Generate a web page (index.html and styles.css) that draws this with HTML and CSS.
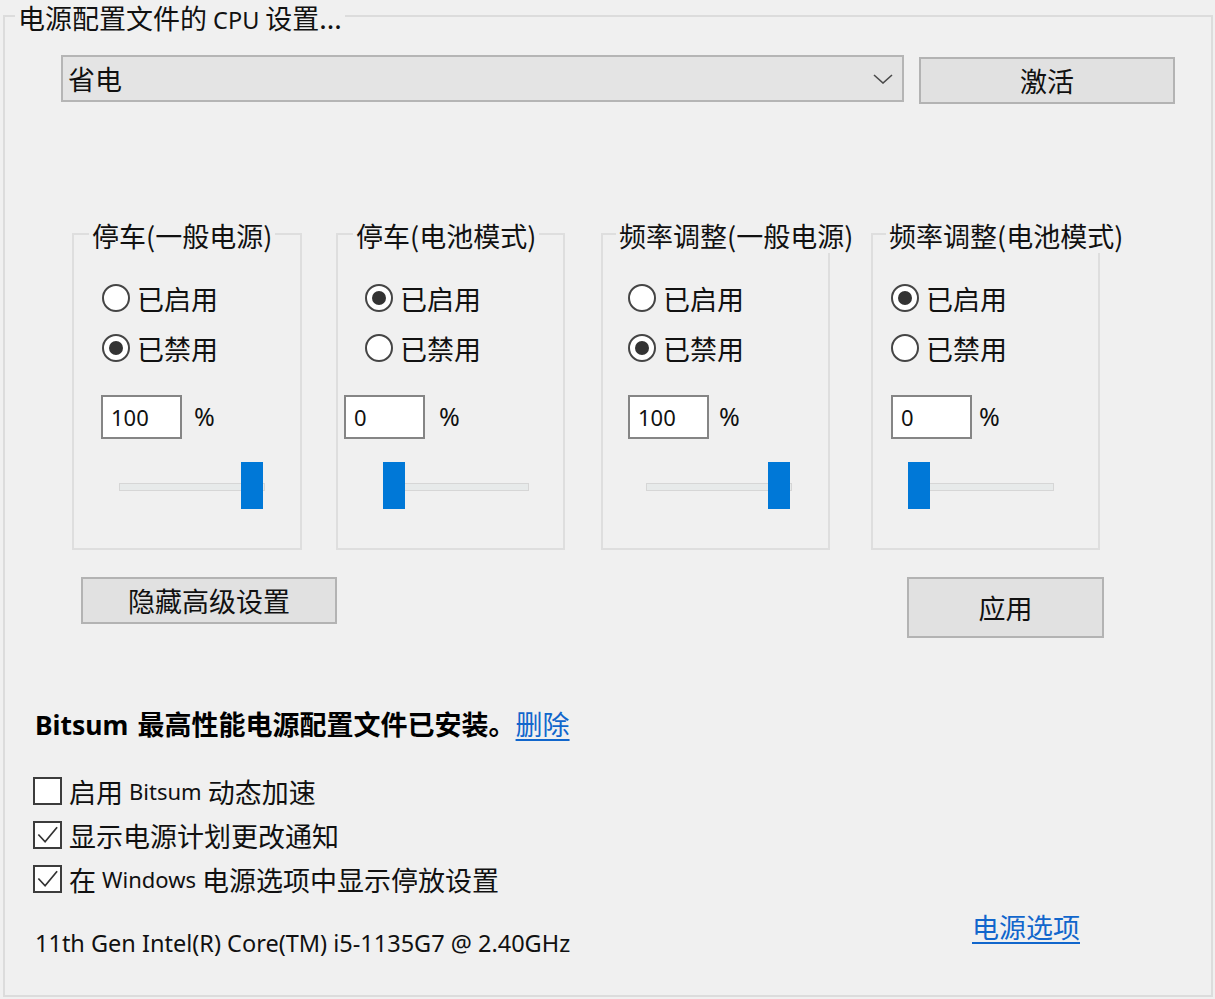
FILE: index.html
```html
<!DOCTYPE html>
<html lang="zh-CN">
<head>
<meta charset="utf-8">
<title>CPU 设置</title>
<link rel="stylesheet" href="styles.css">
</head>
<body>
<div class="frame">
  <div class="frame-title">电源配置文件的 <span class="lat">CPU</span> 设置...</div>

  <div class="profile-row">
    <div class="select">
      <span>省电</span>
      <svg class="chev" width="20" height="10" viewBox="0 0 20 10"><polyline points="1,1 10,9 19,1" fill="none" stroke="#4a4a4a" stroke-width="1.6"/></svg>
    </div>
    <div class="btn btn-activate">激活</div>
  </div>

  <div class="groups">
    <div class="group g1">
      <div class="group-title">停车(一般电源)</div>
      <div class="radio-row"><span class="radio"></span>已启用</div>
      <div class="radio-row"><span class="radio checked"></span>已禁用</div>
      <div class="value-row"><div class="textbox">100</div><span class="pct">%</span></div>
      <div class="slider"><div class="track"></div><div class="thumb max"></div></div>
    </div>
    <div class="group g2">
      <div class="group-title">停车(电池模式)</div>
      <div class="radio-row"><span class="radio checked"></span>已启用</div>
      <div class="radio-row"><span class="radio"></span>已禁用</div>
      <div class="value-row"><div class="textbox">0</div><span class="pct">%</span></div>
      <div class="slider"><div class="track"></div><div class="thumb min"></div></div>
    </div>
    <div class="group g3">
      <div class="group-title">频率调整(一般电源)</div>
      <div class="radio-row"><span class="radio"></span>已启用</div>
      <div class="radio-row"><span class="radio checked"></span>已禁用</div>
      <div class="value-row"><div class="textbox">100</div><span class="pct">%</span></div>
      <div class="slider"><div class="track"></div><div class="thumb max"></div></div>
    </div>
    <div class="group g4">
      <div class="group-title">频率调整(电池模式)</div>
      <div class="radio-row"><span class="radio checked"></span>已启用</div>
      <div class="radio-row"><span class="radio"></span>已禁用</div>
      <div class="value-row"><div class="textbox">0</div><span class="pct">%</span></div>
      <div class="slider"><div class="track"></div><div class="thumb min"></div></div>
    </div>
  </div>

  <div class="action-row">
    <div class="btn btn-hide">隐藏高级设置</div>
    <div class="btn btn-apply">应用</div>
  </div>

  <p class="installed"><b><span class="lat-b">Bitsum</span> 最高性能电源配置文件已安装。</b><a class="link" href="#">删除</a></p>

  <div class="checks">
    <div class="check-row"><span class="checkbox"></span>启用 <span class="lat">Bitsum</span> 动态加速</div>
    <div class="check-row"><span class="checkbox"><svg width="26" height="26" viewBox="0 0 26 26"><polyline points="3.5,12.5 10.5,20 23,5" fill="none" stroke="#333" stroke-width="1.8"/></svg></span>显示电源计划更改通知</div>
    <div class="check-row"><span class="checkbox"><svg width="26" height="26" viewBox="0 0 26 26"><polyline points="3.5,12.5 10.5,20 23,5" fill="none" stroke="#333" stroke-width="1.8"/></svg></span>在 <span class="lat">Windows</span> 电源选项中显示停放设置</div>
  </div>

  <div class="footer">
    <span class="cpu">11th Gen Intel(R) Core(TM) i5-1135G7 @ 2.40GHz</span>
    <a class="link power-link" href="#">电源选项</a>
  </div>
</div>
</body>
</html>
```

FILE: styles.css
```css
* { box-sizing: border-box; }

html, body {
  margin: 0;
  padding: 0;
  background: #f0f0f0;
}

body {
  width: 1215px;
  height: 999px;
  overflow: hidden;
  font-family: "Noto Sans CJK SC", "Noto Sans", sans-serif;
  font-size: 27px;
  color: #111;
}

.lat {
  font-family: "Noto Sans", "Noto Sans CJK SC", sans-serif;
  font-size: 22px;
}

.frame-title .lat { font-size: 23.5px; }

.lat-b {
  font-family: "Noto Sans", "Noto Sans CJK SC", sans-serif;
  font-size: 26.5px;
  margin-right: 3px;
}

.frame {
  position: relative;
  margin: 15px 0 0 3px;
  width: 1210px;
  height: 982px;
  border: 2px solid #dcdcdc;
}

.frame-title {
  position: absolute;
  top: -15px;
  left: 10px;
  padding: 0 3px;
  line-height: 32px;
  background: #f0f0f0;
  white-space: nowrap;
}

/* profile row */
.profile-row {
  display: flex;
  align-items: flex-start;
  margin: 38px 0 0 56px;
}

.select {
  width: 843px;
  height: 47px;
  display: flex;
  align-items: center;
  justify-content: space-between;
  padding: 0 9px 0 5px;
  background: #e4e4e4;
  border: 2px solid #b5b5b5;
  line-height: 1;
}

.chev { display: block; }

.btn {
  display: flex;
  align-items: center;
  justify-content: center;
  background: #e1e1e1;
  border: 2px solid #b3b3b3;
  line-height: 1;
}

.btn-activate {
  width: 256px;
  height: 47px;
  margin: 2px 0 0 15px;
}

/* groups */
.groups {
  display: flex;
  margin-top: 129px;
}

.group {
  position: relative;
  width: 229px;
  height: 317px;
  border: 2px solid #dedede;
  padding-top: 38px;
}

.g1 { width: 230px; margin-left: 67px; --rx: 28px; --bx: 27px; --pg: 12px; --tx: 45px; }
.g2 { margin-left: 34px; --rx: 27px; --bx: 6px; --pg: 14px; --tx: 45px; }
.g3 { margin-left: 36px; --rx: 25px; --bx: 25px; --pg: 10px; --tx: 43px; }
.g4 { margin-left: 41px; --rx: 18px; --bx: 18px; --pg: 7px; --tx: 35px; }

.group-title {
  position: absolute;
  top: -16px;
  left: 15px;
  padding: 0 3px;
  line-height: 34px;
  background: #f0f0f0;
  white-space: nowrap;
}

.g3 .group-title, .g4 .group-title { left: 13px; }

.radio-row {
  height: 50px;
  display: flex;
  align-items: center;
  padding-left: var(--rx);
  line-height: 1;
}

.radio {
  width: 28px;
  height: 28px;
  margin-right: 7px;
  border: 2px solid #454545;
  border-radius: 50%;
  background: #fff;
  display: flex;
  align-items: center;
  justify-content: center;
}

.radio.checked::after {
  content: "";
  width: 14px;
  height: 14px;
  border-radius: 50%;
  background: #333;
}

.value-row {
  display: flex;
  align-items: center;
  margin-top: 22px;
  padding-left: var(--bx);
}

.textbox {
  width: 81px;
  height: 44px;
  padding-left: 8px;
  display: flex;
  align-items: center;
  background: #fff;
  border: 2px solid #858585;
  font-family: "Noto Sans", sans-serif;
  font-size: 22px;
  color: #111;
}

.pct {
  margin-left: var(--pg);
  margin-top: -2px;
  font-family: "Noto Sans", sans-serif;
  font-size: 25px;
  line-height: 1;
}

.slider {
  position: relative;
  width: 146px;
  height: 47px;
  margin: 23px 0 0 var(--tx);
}

.track {
  position: absolute;
  left: 0;
  right: 0;
  top: 21px;
  height: 8px;
  background: #e7eaea;
  border: 1px solid #d6d6d6;
}

.thumb {
  position: absolute;
  top: 0;
  width: 22px;
  height: 47px;
  background: #0078d7;
}

.thumb.max { right: 2px; }
.thumb.min { left: 0; }

/* action buttons */
.action-row {
  display: flex;
  align-items: flex-start;
  margin-top: 27px;
}

.btn-hide {
  width: 256px;
  height: 47px;
  margin-left: 76px;
}

.btn-apply {
  width: 197px;
  height: 61px;
  margin-left: 570px;
}

/* installed line */
.installed {
  margin: 68px 0 0 30px;
  line-height: 36px;
  white-space: nowrap;
}

.installed b { font-weight: 700; color: #000; }

.link {
  color: #1166cc;
  text-decoration: underline;
  text-underline-offset: 4px;
}

/* checkboxes */
.checks {
  margin: 26px 0 0 28px;
}

.check-row {
  height: 44px;
  display: flex;
  align-items: center;
  white-space: pre;
  line-height: 1;
}

.checkbox {
  width: 29px;
  height: 28px;
  margin-right: 7px;
  border: 2px solid #3c3c3c;
  background: #fff;
  display: flex;
  align-items: center;
  justify-content: center;
}

.checkbox svg { display: block; }

/* footer */
.footer {
  display: flex;
  justify-content: space-between;
  align-items: flex-start;
  margin: 0 131px 0 30px;
}

.cpu {
  margin-top: 27px;
  line-height: 30px;
  font-family: "Noto Sans", sans-serif;
  font-size: 23.5px;
  color: #111;
}

.power-link {
  margin-top: 8px;
  line-height: 36px;
}
```
